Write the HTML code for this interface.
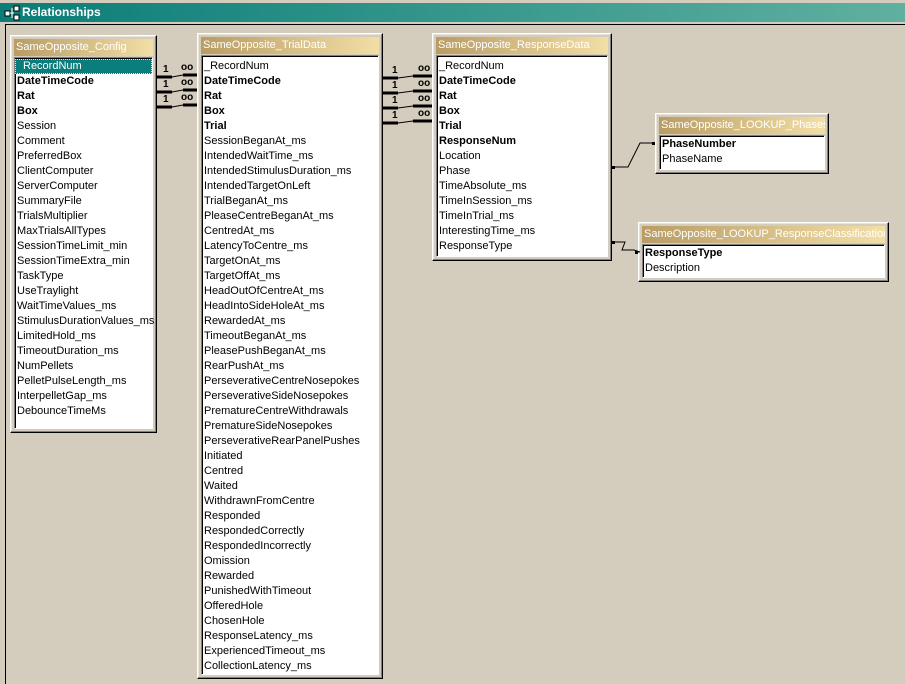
<!DOCTYPE html>
<html><head><meta charset="utf-8"><style>
*{margin:0;padding:0;box-sizing:border-box}
body{width:905px;height:681px;overflow:hidden;background:#d4ccbc;font-family:Tahoma,"Liberation Sans",sans-serif;font-size:11px;position:relative}
.tb{position:absolute;left:0;top:3px;width:905px;height:19px;background:linear-gradient(to right,#0a7d78,#60b0a0);color:#fff;font-weight:bold;font-size:12px;line-height:19px;padding-left:22px}
.frame{position:absolute;left:5px;top:24px;width:905px;height:660px;border-left:1px solid #000;border-top:1px solid #000}
.t{position:absolute;background:#d4ccbc;border:1px solid;border-color:#fff #000 #000 #fff;box-shadow:inset -1px -1px #808080,inset 1px 1px #e8e4dc}
.cap{position:absolute;left:3px;right:3px;top:3px;height:17px;background:linear-gradient(to right,#b89c64,#f2dfa6);color:#fff;line-height:17px;padding-left:2px;white-space:nowrap;overflow:hidden}
.lst{position:absolute;background:#fff;border:1px solid;border-color:#808080 #fff #fff #808080;box-shadow:inset 1px 1px #000}
.lst div{height:15px;line-height:15px;padding-left:2px;white-space:nowrap}
.b{font-weight:bold}
.sel{background:#0a7d7d;color:#fff;padding-left:8px!important;outline:1px dotted #ff0;outline-offset:-1px}
svg{position:absolute;left:0;top:0}
.l{position:absolute;font-size:10px;font-weight:bold}
</style></head><body>
<div class="tb">Relationships</div>
<svg width="20" height="22" style="left:3px;top:3px"><rect x="2" y="8" width="5" height="5" fill="#fff" stroke="#000"/><rect x="11" y="3" width="5" height="5" fill="#fff" stroke="#000"/><rect x="11" y="12" width="5" height="5" fill="#fff" stroke="#000"/><path d="M7 10H11M9 5V15" stroke="#fff"/></svg>
<div class="frame"></div>

<div class="t" style="left:10px;top:35px;width:147px;height:398px"><div class="cap">SameOpposite_Config</div>
<div class="lst" style="left:3px;top:21px;right:3px;bottom:3px;padding-top:1px">
<div class="sel">RecordNum</div><div class="b">DateTimeCode</div><div class="b">Rat</div><div class="b">Box</div><div>Session</div><div>Comment</div><div>PreferredBox</div><div>ClientComputer</div><div>ServerComputer</div><div>SummaryFile</div><div>TrialsMultiplier</div><div>MaxTrialsAllTypes</div><div>SessionTimeLimit_min</div><div>SessionTimeExtra_min</div><div>TaskType</div><div>UseTraylight</div><div>WaitTimeValues_ms</div><div>StimulusDurationValues_ms</div><div>LimitedHold_ms</div><div>TimeoutDuration_ms</div><div>NumPellets</div><div>PelletPulseLength_ms</div><div>InterpelletGap_ms</div><div>DebounceTimeMs</div>
</div></div>

<div class="t" style="left:197px;top:33px;width:186px;height:646px"><div class="cap">SameOpposite_TrialData</div>
<div class="lst" style="left:3px;top:21px;right:3px;bottom:3px;padding-top:3px">
<div>_RecordNum</div><div class="b">DateTimeCode</div><div class="b">Rat</div><div class="b">Box</div><div class="b">Trial</div><div>SessionBeganAt_ms</div><div>IntendedWaitTime_ms</div><div>IntendedStimulusDuration_ms</div><div>IntendedTargetOnLeft</div><div>TrialBeganAt_ms</div><div>PleaseCentreBeganAt_ms</div><div>CentredAt_ms</div><div>LatencyToCentre_ms</div><div>TargetOnAt_ms</div><div>TargetOffAt_ms</div><div>HeadOutOfCentreAt_ms</div><div>HeadIntoSideHoleAt_ms</div><div>RewardedAt_ms</div><div>TimeoutBeganAt_ms</div><div>PleasePushBeganAt_ms</div><div>RearPushAt_ms</div><div>PerseverativeCentreNosepokes</div><div>PerseverativeSideNosepokes</div><div>PrematureCentreWithdrawals</div><div>PrematureSideNosepokes</div><div>PerseverativeRearPanelPushes</div><div>Initiated</div><div>Centred</div><div>Waited</div><div>WithdrawnFromCentre</div><div>Responded</div><div>RespondedCorrectly</div><div>RespondedIncorrectly</div><div>Omission</div><div>Rewarded</div><div>PunishedWithTimeout</div><div>OfferedHole</div><div>ChosenHole</div><div>ResponseLatency_ms</div><div>ExperiencedTimeout_ms</div><div>CollectionLatency_ms</div>
</div></div>

<div class="t" style="left:432px;top:33px;width:180px;height:228px"><div class="cap">SameOpposite_ResponseData</div>
<div class="lst" style="left:3px;top:21px;right:3px;bottom:3px;padding-top:3px">
<div>_RecordNum</div><div class="b">DateTimeCode</div><div class="b">Rat</div><div class="b">Box</div><div class="b">Trial</div><div class="b">ResponseNum</div><div>Location</div><div>Phase</div><div>TimeAbsolute_ms</div><div>TimeInSession_ms</div><div>TimeInTrial_ms</div><div>InterestingTime_ms</div><div>ResponseType</div>
</div></div>

<div class="t" style="left:655px;top:113px;width:174px;height:61px"><div class="cap">SameOpposite_LOOKUP_Phases</div>
<div class="lst" style="left:3px;top:21px;right:3px;bottom:3px;padding-top:1px">
<div class="b">PhaseNumber</div><div>PhaseName</div></div></div>

<div class="t" style="left:638px;top:222px;width:251px;height:60px"><div class="cap">SameOpposite_LOOKUP_ResponseClassification</div>
<div class="lst" style="left:3px;top:21px;right:3px;bottom:3px;padding-top:1px">
<div class="b">ResponseType</div><div>Description</div></div></div>

<svg width="905" height="681">
<g stroke="#000" fill="none">
<path d="M157 77H172L183 75H197M157 92H172L183 90H197M157 107H172L183 105H197" stroke-width="1"/>
<path d="M157 77H172M183 75H197M157 92H172M183 90H197M157 107H172M183 105H197" stroke-width="3"/>
<path d="M383 78H398L413 76H432M383 93H398L413 91H432M383 108H398L413 106H432M383 123H398L413 121H432" stroke-width="1"/>
<path d="M383 78H398M413 76H432M383 93H398M413 91H432M383 108H398M413 106H432M383 123H398M413 121H432" stroke-width="3"/>
<path d="M613 167H628L640 143H655"/>
<path d="M613 242H625L622 250H634L640 252H638"/>
</g>
<rect x="612" y="166" width="3" height="3"/><rect x="652" y="142" width="3" height="3"/>
<rect x="612" y="241" width="3" height="3"/><rect x="635" y="251" width="3" height="3"/>
</svg>
<div class="l" style="left:163px;top:64px">1</div><div class="l" style="left:181px;top:62px">oo</div>
<div class="l" style="left:163px;top:79px">1</div><div class="l" style="left:181px;top:77px">oo</div>
<div class="l" style="left:163px;top:94px">1</div><div class="l" style="left:181px;top:92px">oo</div>
<div class="l" style="left:392px;top:65px">1</div><div class="l" style="left:418px;top:63px">oo</div>
<div class="l" style="left:392px;top:80px">1</div><div class="l" style="left:418px;top:78px">oo</div>
<div class="l" style="left:392px;top:95px">1</div><div class="l" style="left:418px;top:93px">oo</div>
<div class="l" style="left:392px;top:110px">1</div><div class="l" style="left:418px;top:108px">oo</div>
</body></html>
